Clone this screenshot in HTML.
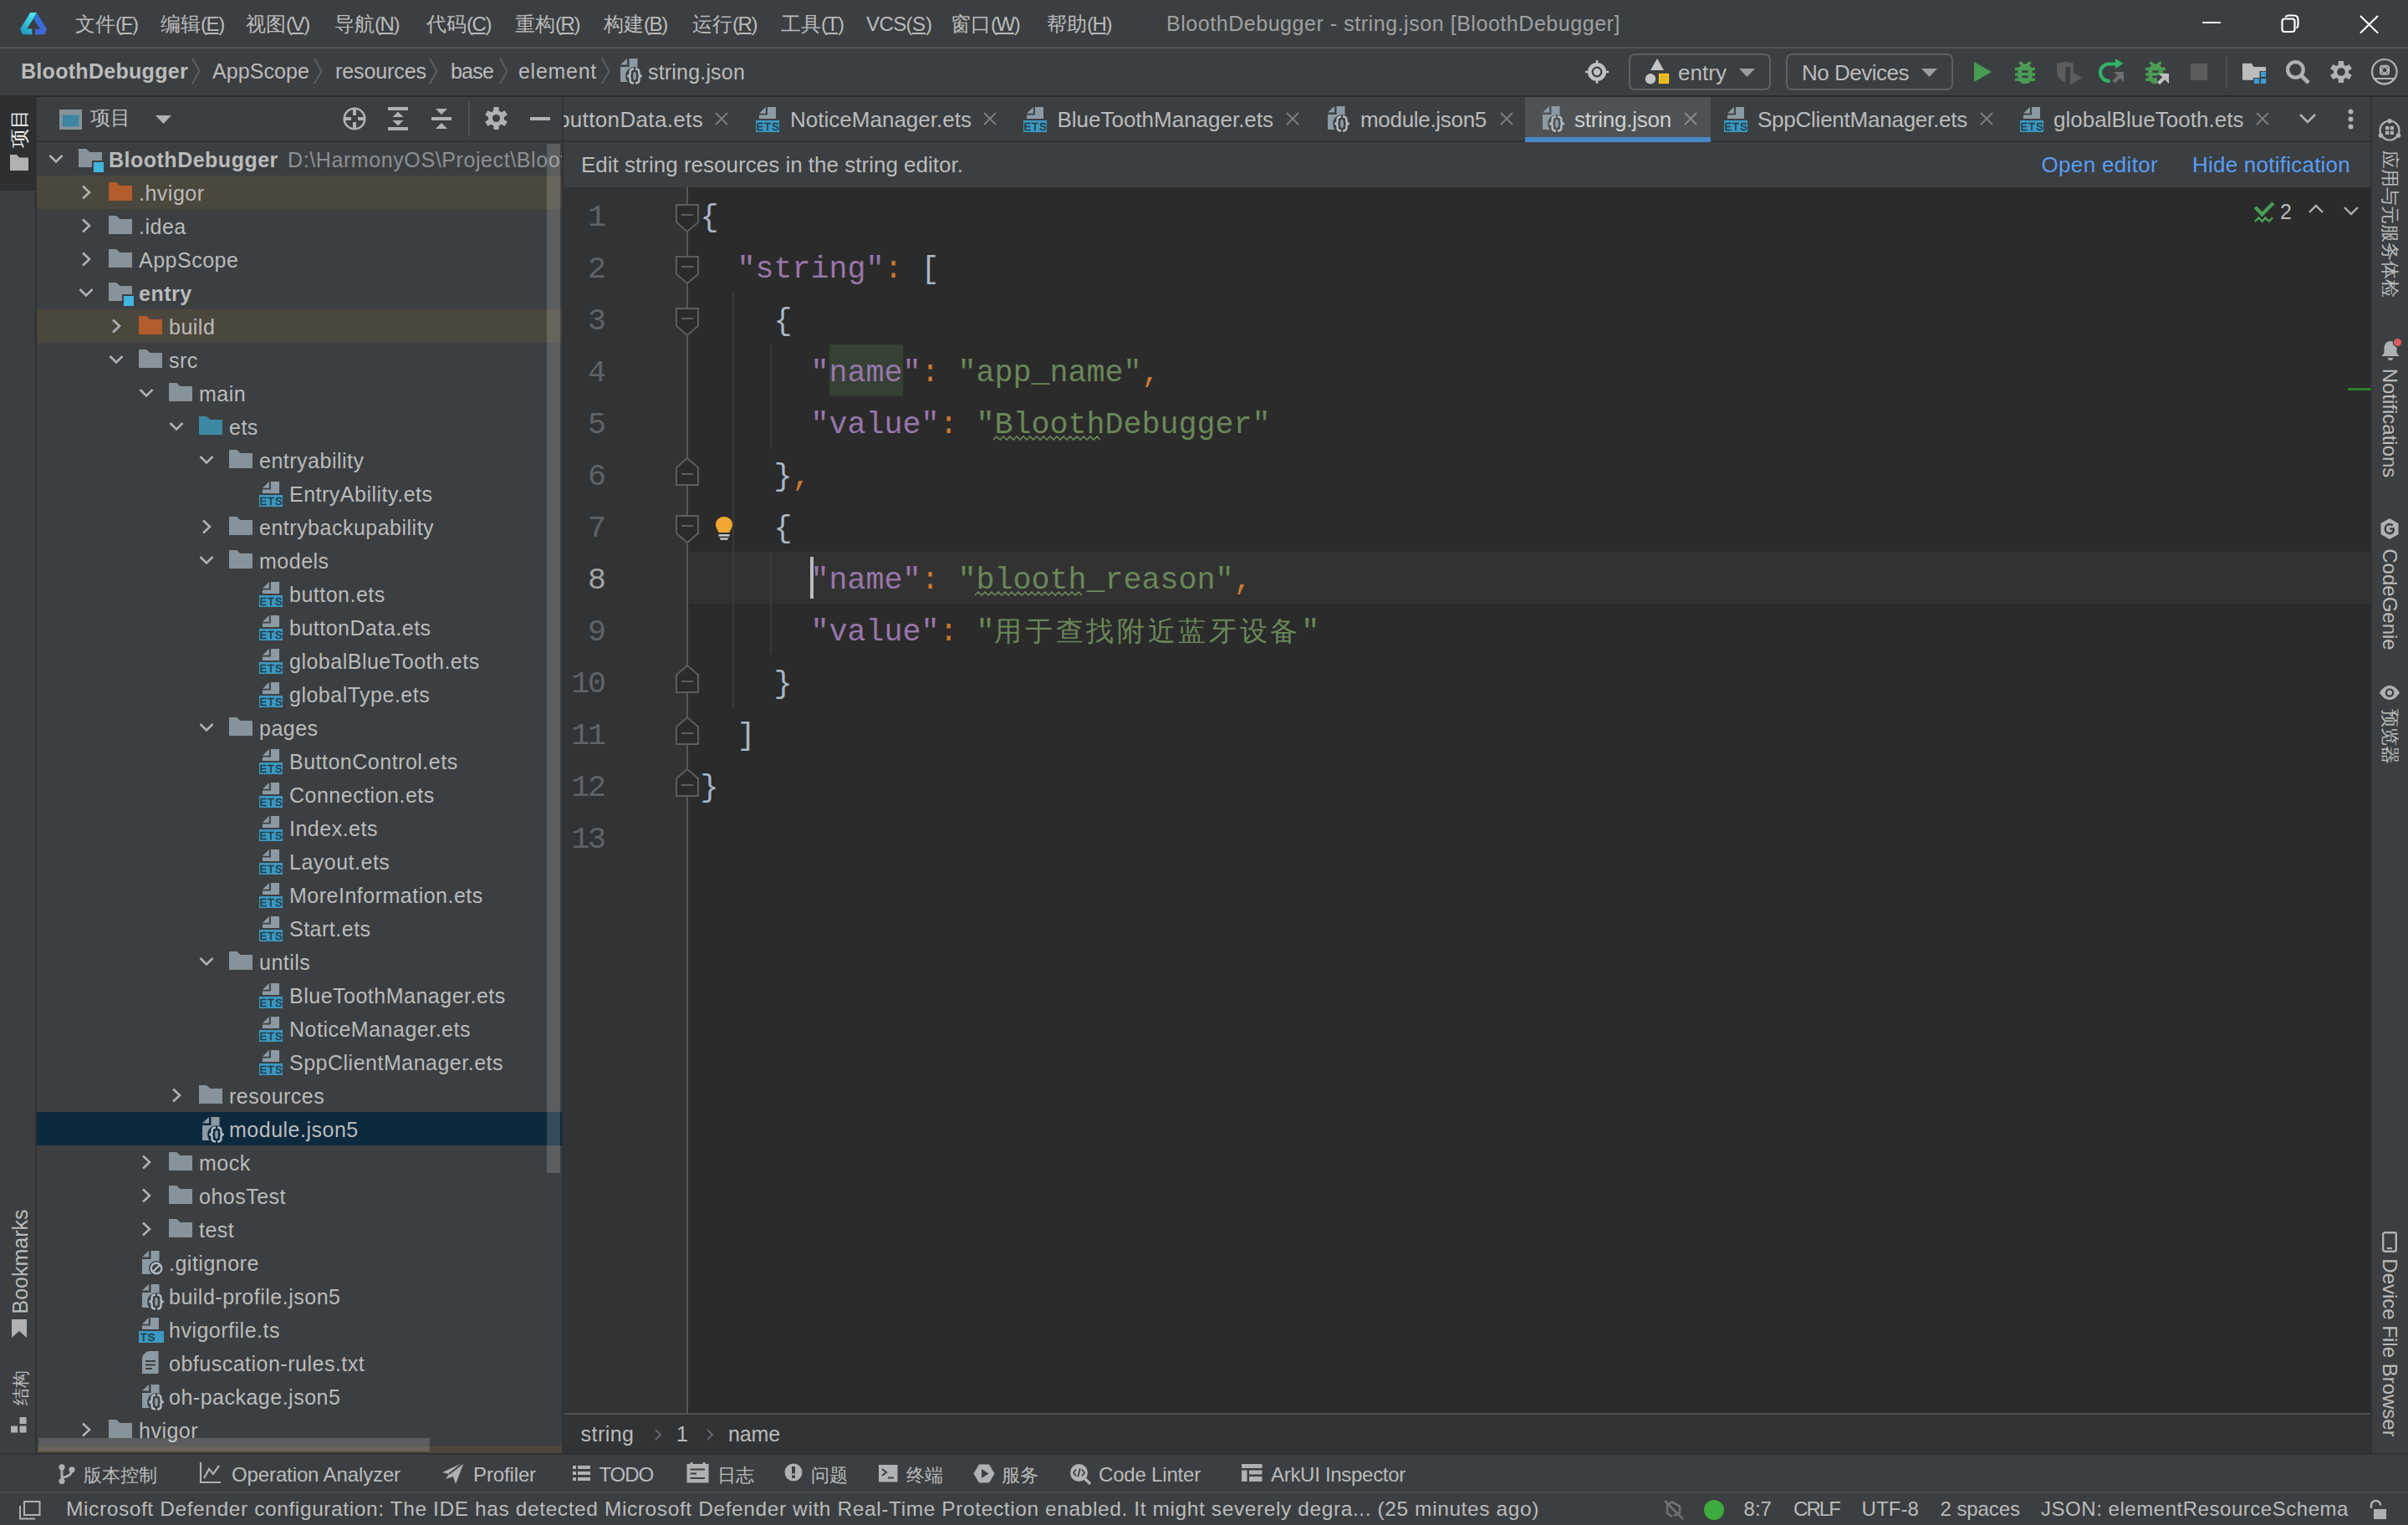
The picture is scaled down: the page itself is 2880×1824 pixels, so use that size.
<!DOCTYPE html><html><head><meta charset="utf-8"><title>DevEco Studio</title><style>
*{box-sizing:border-box}
html,body{margin:0;padding:0}
body{width:2880px;height:1824px;overflow:hidden;background:#3c3f41;position:relative;font-family:"Liberation Sans",sans-serif;color:#bbbbbb;font-size:25px}
.a{position:absolute;white-space:nowrap}
.t{position:absolute;white-space:nowrap;height:80px;line-height:80px}
.t span{line-height:0}
svg{position:absolute;overflow:visible}
.m{font-family:"Liberation Mono",monospace}
.b{font-weight:bold}
</style></head><body><div class="a" style="left:0px;top:56px;width:2880px;height:2px;background:#515151;"></div><div class="a" style="left:0px;top:114px;width:2880px;height:2px;background:#2b2b2b;"></div><div class="a" style="left:0px;top:114px;width:42px;height:114px;background:#2d2f31;"></div><div class="a" style="left:42px;top:116px;width:2px;height:1624px;background:#2f3133;"></div><div class="a" style="left:44px;top:168px;width:628px;height:2px;background:#323232;"></div><div class="a" style="left:672px;top:116px;width:2px;height:1624px;background:#2f3133;"></div><div class="a" style="left:674px;top:168px;width:2163px;height:2px;background:#323232;"></div><div class="a" style="left:674px;top:224px;width:148px;height:1466px;background:#313335;"></div><div class="a" style="left:822px;top:224px;width:2015px;height:1466px;background:#2b2b2b;"></div><div class="a" style="left:674px;top:1690px;width:2163px;height:2px;background:#505254;"></div><div class="a" style="left:674px;top:1692px;width:2163px;height:48px;background:#313335;"></div><div class="a" style="left:2835px;top:116px;width:2px;height:1624px;background:#2f3133;"></div><div class="a" style="left:0px;top:1738px;width:2880px;height:2px;background:#2f3133;"></div><div class="a" style="left:0px;top:1784px;width:2880px;height:2px;background:#47494b;"></div><svg style="left:24px;top:14px" width="34" height="28" viewBox="0 0 34 28"><defs><linearGradient id="lg1" x1="0" y1="1" x2="0.6" y2="0"><stop offset="0" stop-color="#1a8fc0"/><stop offset="1" stop-color="#48e3ea"/></linearGradient>
<linearGradient id="lg2" x1="0" y1="0" x2="1" y2="1"><stop offset="0" stop-color="#2872d8"/><stop offset="1" stop-color="#4766d6"/></linearGradient></defs>
<polygon fill="url(#lg1)" points="12.3,1 20,1 16,8.1 8.2,20.4 14.2,20.4 14.2,27.2 3.2,27.2 0,20.8"/>
<polygon fill="url(#lg2)" points="20,1.4 32.1,20.8 29.1,27.2 18.1,27.2 18.1,20.8 23.9,20.8 16,8.1"/></svg><div class="t" style="left:90px;top:-10.52px;font-size:24px;color:#bbbbbb;"><span style="font-size:23.5px">文件</span><span style="letter-spacing:-1.6px">(</span><span style="letter-spacing:-1.2px"><span style="text-decoration:underline;text-decoration-thickness:2px;text-underline-offset:2px">F</span></span>)</div><div class="t" style="left:192px;top:-10.52px;font-size:24px;color:#bbbbbb;"><span style="font-size:23.5px">编辑</span><span style="letter-spacing:-1.6px">(</span><span style="letter-spacing:-1.2px"><span style="text-decoration:underline;text-decoration-thickness:2px;text-underline-offset:2px">E</span></span>)</div><div class="t" style="left:294px;top:-10.52px;font-size:24px;color:#bbbbbb;"><span style="font-size:23.5px">视图</span><span style="letter-spacing:-1.6px">(</span><span style="letter-spacing:-1.2px"><span style="text-decoration:underline;text-decoration-thickness:2px;text-underline-offset:2px">V</span></span>)</div><div class="t" style="left:400px;top:-10.52px;font-size:24px;color:#bbbbbb;"><span style="font-size:23.5px">导航</span><span style="letter-spacing:-1.6px">(</span><span style="letter-spacing:-1.2px"><span style="text-decoration:underline;text-decoration-thickness:2px;text-underline-offset:2px">N</span></span>)</div><div class="t" style="left:510px;top:-10.52px;font-size:24px;color:#bbbbbb;"><span style="font-size:23.5px">代码</span><span style="letter-spacing:-1.6px">(</span><span style="letter-spacing:-1.2px"><span style="text-decoration:underline;text-decoration-thickness:2px;text-underline-offset:2px">C</span></span>)</div><div class="t" style="left:616px;top:-10.52px;font-size:24px;color:#bbbbbb;"><span style="font-size:23.5px">重构</span><span style="letter-spacing:-1.6px">(</span><span style="letter-spacing:-1.2px"><span style="text-decoration:underline;text-decoration-thickness:2px;text-underline-offset:2px">R</span></span>)</div><div class="t" style="left:722px;top:-10.52px;font-size:24px;color:#bbbbbb;"><span style="font-size:23.5px">构建</span><span style="letter-spacing:-1.6px">(</span><span style="letter-spacing:-1.2px"><span style="text-decoration:underline;text-decoration-thickness:2px;text-underline-offset:2px">B</span></span>)</div><div class="t" style="left:828px;top:-10.52px;font-size:24px;color:#bbbbbb;"><span style="font-size:23.5px">运行</span><span style="letter-spacing:-1.6px">(</span><span style="letter-spacing:-1.2px"><span style="text-decoration:underline;text-decoration-thickness:2px;text-underline-offset:2px">R</span></span>)</div><div class="t" style="left:934px;top:-10.52px;font-size:24px;color:#bbbbbb;"><span style="font-size:23.5px">工具</span><span style="letter-spacing:-1.6px">(</span><span style="letter-spacing:-1.2px"><span style="text-decoration:underline;text-decoration-thickness:2px;text-underline-offset:2px">T</span></span>)</div><div class="t" style="left:1036px;top:-10.52px;font-size:24px;color:#bbbbbb;"><span style="letter-spacing:-0.6px">VCS(</span><span style="text-decoration:underline;text-decoration-thickness:2px;text-underline-offset:2px">S</span>)</div><div class="t" style="left:1137px;top:-10.52px;font-size:24px;color:#bbbbbb;"><span style="font-size:23.5px">窗口</span><span style="letter-spacing:-1.6px">(</span><span style="letter-spacing:-1.2px"><span style="text-decoration:underline;text-decoration-thickness:2px;text-underline-offset:2px">W</span></span>)</div><div class="t" style="left:1252px;top:-10.52px;font-size:24px;color:#bbbbbb;"><span style="font-size:23.5px">帮助</span><span style="letter-spacing:-1.6px">(</span><span style="letter-spacing:-1.2px"><span style="text-decoration:underline;text-decoration-thickness:2px;text-underline-offset:2px">H</span></span>)</div><div class="t" style="left:1395px;top:-12.46px;font-size:25px;color:#a0a0a0;letter-spacing:0.547px;">BloothDebugger - string.json [BloothDebugger]</div><svg style="left:2634px;top:18px" width="24" height="22" viewBox="0 0 24 22"><line x1="1" y1="9" x2="21" y2="9" stroke="#ffffff" stroke-width="2.2" stroke-linecap="round"/></svg><svg style="left:2728px;top:17px" width="24" height="24" viewBox="0 0 24 24"><path d="M5.5 3.5 C6.2 2 7.5 1.5 9.5 1.5 H15.5 C18.8 1.5 20.5 3.3 20.5 6.5 V13 C20.5 14.8 20 15.8 18.5 16.5" fill="none" stroke="#ffffff" stroke-width="2.2"/><rect x="1.5" y="5.5" width="15" height="15.5" rx="3" fill="none" stroke="#ffffff" stroke-width="2.2"/></svg><svg style="left:2822px;top:18px" width="24" height="24" viewBox="0 0 24 24"><path d="M1.5 1.5 L21.5 21 M21.5 1.5 L1.5 21" stroke="#ffffff" stroke-width="2" stroke-linecap="round"/></svg><div class="t b" style="left:25px;top:45.34px;font-size:25px;color:#bbbbbb;letter-spacing:0.298px;">BloothDebugger</div><svg style="left:229px;top:70px" width="11" height="30" viewBox="0 0 11 30"><path d="M1 0 L9.5 15.0 L1 30" fill="none" stroke="#5f6264" stroke-width="1.8"/></svg><div class="t" style="left:254px;top:45.34px;font-size:25px;color:#bbbbbb;letter-spacing:0.078px;">AppScope</div><svg style="left:375px;top:70px" width="11" height="30" viewBox="0 0 11 30"><path d="M1 0 L9.5 15.0 L1 30" fill="none" stroke="#5f6264" stroke-width="1.8"/></svg><div class="t" style="left:401px;top:45.34px;font-size:25px;color:#bbbbbb;letter-spacing:-0.085px;">resources</div><svg style="left:513px;top:70px" width="11" height="30" viewBox="0 0 11 30"><path d="M1 0 L9.5 15.0 L1 30" fill="none" stroke="#5f6264" stroke-width="1.8"/></svg><div class="t" style="left:539px;top:45.34px;font-size:25px;color:#bbbbbb;letter-spacing:-0.805px;">base</div><svg style="left:597px;top:70px" width="11" height="30" viewBox="0 0 11 30"><path d="M1 0 L9.5 15.0 L1 30" fill="none" stroke="#5f6264" stroke-width="1.8"/></svg><div class="t" style="left:620px;top:45.34px;font-size:25px;color:#bbbbbb;letter-spacing:0.721px;">element</div><svg style="left:719px;top:70px" width="11" height="30" viewBox="0 0 11 30"><path d="M1 0 L9.5 15.0 L1 30" fill="none" stroke="#5f6264" stroke-width="1.8"/></svg><svg width="0" height="0" style="position:absolute"><defs>
<symbol id="ijson" viewBox="0 0 28 32"><path fill="#8c9aa4" d="M0 7.5 L8 0 V7.5 Z M10.5 0 H20.5 V28 H0 V10 H10.5 Z"/><circle cx="17" cy="21" r="10.8" fill="var(--bg)"/>
<path fill="none" stroke="#afbac3" stroke-width="2.5" d="M16 12.6 C12.6 12.6 11.6 13.8 11.6 16.3 V18.6 C11.6 20.1 10.6 21 8.2 21 C10.6 21 11.6 21.9 11.6 23.4 V25.7 C11.6 28.2 12.6 29.4 16 29.4 M18 12.6 C21.4 12.6 22.4 13.8 22.4 16.3 V18.6 C22.4 20.1 23.4 21 25.8 21 C23.4 21 22.4 21.9 22.4 23.4 V25.7 C22.4 28.2 21.4 29.4 18 29.4"/>
<ellipse cx="17" cy="21" rx="1.9" ry="5.2" fill="#8c9aa4"/></symbol>
<symbol id="iets" viewBox="0 0 28 30"><path fill="#8c9aa4" d="M4 7.8 L11.9 0 V7.8 Z M13.9 0 H24 V14 H4 V9.6 H13.9 Z"/><rect x="0" y="16" width="28.2" height="14" fill="#3d98c0"/>
<text x="14.5" y="28" text-anchor="middle" font-family="Liberation Sans" font-size="13" fill="#1c3a48" stroke="#1c3a48" stroke-width="0.45" letter-spacing="0.9">ETS</text></symbol>
<symbol id="its" viewBox="0 0 30 30"><path fill="#8c9aa4" d="M4 7.8 L11.9 0 V7.8 Z M13.9 0 H24 V14 H4 V9.6 H13.9 Z"/><rect x="0" y="16" width="30" height="14" fill="#3d98c0"/>
<text x="11" y="28.2" text-anchor="middle" font-family="Liberation Sans" font-size="13" fill="#1c3a48" stroke="#1c3a48" stroke-width="0.45" letter-spacing="0.9">TS</text></symbol>
<symbol id="ifold" viewBox="0 0 28 22"><path d="M0 0 H9.2 L13.4 3.9 H28 V22 H0 Z"/></symbol>
<symbol id="imod" viewBox="0 0 30 28"><path fill="#87939a" d="M0 0 H9.2 L13.4 3.9 H28 V14 H15 V22 H0 Z"/><rect x="18" y="16" width="12" height="12" fill="#40b6e0"/></symbol>
</defs></svg><svg style="left:742px;top:70px;--bg:#3c3f41" width="28" height="32"><use href="#ijson" width="28" height="32"/></svg><div class="t" style="left:775px;top:45.54px;font-size:25px;color:#bbbbbb;letter-spacing:0.186px;">string.json</div><svg style="left:1896px;top:72px" width="28" height="28" viewBox="0 0 28 28"><circle cx="14" cy="14" r="11.1" fill="#bfc1c3"/><circle cx="14" cy="14" r="5.3" fill="none" stroke="#3c3f41" stroke-width="2.2"/><path d="M14 0 V4 M14 24 V28 M0 14 H4 M24 14 H28" stroke="#bfc1c3" stroke-width="2.4"/></svg><div class="a" style="left:1948px;top:64px;width:170px;height:44px;background:transparent;border:2px solid #5e6061;border-radius:7px"></div><svg style="left:1966px;top:70px" width="32" height="32" viewBox="0 0 32 32"><polygon points="16,0 24,14 8,14" fill="#c5c5c5"/><circle cx="8" cy="24.3" r="6.2" fill="#c5c5c5"/><rect x="18.5" y="18.5" width="11" height="11" fill="#e8b820" stroke="#f7cc28" stroke-width="1.2"/></svg><div class="t" style="left:2007px;top:46.99px;font-size:26px;color:#bbbbbb;letter-spacing:0.037px;">entry</div><svg style="left:2080px;top:82px" width="20" height="11" viewBox="0 0 20 11"><polygon points="0,0 19,0 9.5,10" fill="#9a9da1"/></svg><div class="a" style="left:2136px;top:64px;width:200px;height:44px;background:transparent;border:2px solid #5e6061;border-radius:7px"></div><div class="t" style="left:2155px;top:46.99px;font-size:26px;color:#bbbbbb;letter-spacing:-0.494px;">No Devices</div><svg style="left:2298px;top:82px" width="20" height="11" viewBox="0 0 20 11"><polygon points="0,0 19,0 9.5,10" fill="#9a9da1"/></svg><svg style="left:2360px;top:73px" width="24" height="26" viewBox="0 0 24 26"><polygon points="1,1 22,13 1,25" fill="#499c54"/></svg><svg style="left:2410px;top:72px" width="24" height="29" viewBox="0 0 24 29"><g fill="#499c54"><path d="M5.4 2.4 L12 7.8 L18.6 2.4" fill="none" stroke="#499c54" stroke-width="3.4"/><rect x="3.3" y="4.6" width="17.4" height="23.6" rx="8.7"/><rect x="0" y="8.7" width="24" height="3.4"/><rect x="0" y="15.4" width="24" height="3.3"/><rect x="0" y="21.6" width="24" height="3.3"/></g><rect x="8.3" y="12.3" width="7.4" height="2.6" fill="#3c3f41"/><rect x="8.3" y="18.6" width="7.4" height="2.6" fill="#3c3f41"/></svg><svg style="left:2459px;top:73px" width="32" height="30" viewBox="0 0 32 30"><path d="M1 2.8 L11 0.8 L21 2.8 V12.5 H17 V7 H11.5 V26 C5 23 1 19 1 12 Z" fill="#5b5c5e"/><polygon points="17,11.5 31,20 17,28.8" fill="#5b5c5e"/></svg><svg style="left:2509px;top:69px" width="34" height="34" viewBox="0 0 34 34"><path d="M21 7.5 H13.5 C7.5 7.5 3 12 3 17.5 C3 23 7.5 27.8 13 27.8" fill="none" stroke="#2fb36a" stroke-width="4.2" stroke-linecap="round"/><polygon points="21,1 30.5,7 21,13" fill="#2fb36a"/><path d="M19 29 L27 21" stroke="#6e6e6e" stroke-width="4.2"/><polygon points="19.3,17 31,17 31,29" fill="#6e6e6e"/></svg><svg style="left:2566px;top:72px" width="32" height="30" viewBox="0 0 32 30"><g fill="#499c54"><path d="M5.4 2.4 L12 7.8 L18.6 2.4" fill="none" stroke="#499c54" stroke-width="3.4"/><rect x="3.3" y="4.6" width="17.4" height="23.6" rx="8.7"/><rect x="0" y="8.7" width="24" height="3.4"/><rect x="0" y="15.4" width="24" height="3.3"/><rect x="0" y="21.6" width="24" height="3.3"/></g><rect x="8.3" y="12.3" width="7.4" height="2.6" fill="#3c3f41"/><rect x="8.3" y="18.6" width="7.4" height="2.6" fill="#3c3f41"/><path d="M14 30 V18 H26 V30 Z" fill="#3c3f41"/><path d="M15.5 27.7 L24 19.4" stroke="#c0c0c0" stroke-width="4.2"/><polygon points="16,16 28,16 28,28" fill="#c0c0c0"/></svg><div class="a" style="left:2620px;top:76px;width:20px;height:20px;background:#5b5c5e;"></div><div class="a" style="left:2662px;top:66px;width:2px;height:40px;background:#515151;"></div><svg style="left:2682px;top:75px" width="30" height="26" viewBox="0 0 30 26"><path d="M0 0.8 H11 L13.3 5 H28 V10 H20.5 V18 H13 V20.8 H0 Z" fill="#bcbcbc"/><rect x="22" y="10.8" width="6.2" height="6.2" fill="#3d9ad6"/><rect x="14" y="19" width="6.2" height="6" fill="#3d9ad6"/><rect x="22" y="19" width="6.2" height="6" fill="#3d9ad6"/></svg><svg style="left:2734px;top:72px" width="32" height="32" viewBox="0 0 32 32"><circle cx="11.4" cy="11.4" r="9.3" fill="none" stroke="#afb1b3" stroke-width="4.3"/><path d="M18.5 18.5 L27 27" stroke="#afb1b3" stroke-width="4.6"/></svg><svg style="left:2787px;top:73px" width="26" height="26" viewBox="0 0 26 26"><g fill="#afb1b3"><rect x="9.8" y="0" width="6.4" height="6.5" rx="0.8" transform="rotate(0 13 13)"/><rect x="9.8" y="0" width="6.4" height="6.5" rx="0.8" transform="rotate(60 13 13)"/><rect x="9.8" y="0" width="6.4" height="6.5" rx="0.8" transform="rotate(120 13 13)"/><rect x="9.8" y="0" width="6.4" height="6.5" rx="0.8" transform="rotate(180 13 13)"/><rect x="9.8" y="0" width="6.4" height="6.5" rx="0.8" transform="rotate(240 13 13)"/><rect x="9.8" y="0" width="6.4" height="6.5" rx="0.8" transform="rotate(300 13 13)"/><circle cx="13" cy="13" r="9.1"/></g><circle cx="13" cy="13" r="4.8" fill="#3c3f41"/></svg><svg style="left:2835px;top:69px" width="34" height="34" viewBox="0 0 34 34"><circle cx="16.8" cy="16.8" r="14.8" fill="none" stroke="#afb1b3" stroke-width="2.2"/><rect x="12" y="9.8" width="10" height="10" rx="2.5" fill="none" stroke="#afb1b3" stroke-width="2"/><circle cx="17" cy="14.8" r="3.3" fill="none" stroke="#afb1b3" stroke-width="1.6"/><path d="M5.2 25 H28.4 C26 29 21.5 31.2 16.8 31.2 C12 31.2 7.6 29 5.2 25 Z" fill="none" stroke="#afb1b3" stroke-width="2"/></svg><div class="a" style="left:23.5px;top:153.5px;width:0;height:0"><div style="position:absolute;left:0;top:0;transform:translate(-50%,-50%) rotate(-90deg);white-space:nowrap;font-size:22.5px;line-height:28.5px;color:#f0f0f0">项目</div></div><svg style="left:12px;top:185px" width="23" height="20" viewBox="0 0 23 20"><path d="M0 0 H8 L11 3.5 H22 V19 H0 Z" fill="#afb1b3"/></svg><div class="a" style="left:23.5px;top:1509px;width:0;height:0"><div style="position:absolute;left:0;top:0;transform:translate(-50%,-50%) rotate(-90deg);white-space:nowrap;font-size:25px;line-height:31px;color:#bbbbbb">Bookmarks</div></div><svg style="left:13px;top:1578px" width="20" height="23" viewBox="0 0 20 23"><path d="M1 0 H19 V22 L10 14 L1 22 Z" fill="#afb1b3"/></svg><div class="a" style="left:24px;top:1660px;width:0;height:0"><div style="position:absolute;left:0;top:0;transform:translate(-50%,-50%) rotate(-90deg);white-space:nowrap;font-size:21px;line-height:27px;color:#bbbbbb">结构</div></div><svg style="left:13px;top:1695px" width="20" height="20" viewBox="0 0 20 20"><rect x="10.5" y="0" width="8" height="8" fill="#afb1b3"/><rect x="0" y="10.5" width="8" height="8" fill="#afb1b3"/><rect x="10.5" y="10.5" width="8" height="8" fill="#afb1b3"/></svg><svg style="left:70px;top:130px" width="30" height="26" viewBox="0 0 30 26"><rect x="1" y="1" width="27" height="24" fill="#87939a"/><rect x="4.5" y="7.5" width="20" height="14" fill="#3d87a3"/></svg><div class="t" style="left:108px;top:103.18px;font-size:24px;color:#bbbbbb;"><span style="position:relative;top:-2px;font-size:24px">项目</span></div><svg style="left:186px;top:138px" width="20" height="11" viewBox="0 0 20 11"><polygon points="0,0 19,0 9.5,10" fill="#afb1b3"/></svg><svg style="left:410px;top:128px" width="28" height="28" viewBox="0 0 28 28"><circle cx="14" cy="14" r="12.3" fill="none" stroke="#afb1b3" stroke-width="2.6"/><path d="M14 2 V10 M14 18 V26 M2 14 H10 M18 14 H26" stroke="#afb1b3" stroke-width="4"/></svg><svg style="left:463px;top:127px" width="26" height="30" viewBox="0 0 26 30"><rect x="1" y="1" width="24" height="4" fill="#afb1b3"/><rect x="1" y="25" width="24" height="4" fill="#afb1b3"/><polygon points="6.5,13 19.5,13 13,6.5" fill="#afb1b3"/><polygon points="6.5,17 19.5,17 13,23.5" fill="#afb1b3"/></svg><svg style="left:515px;top:129px" width="26" height="26" viewBox="0 0 26 26"><rect x="1" y="11" width="24" height="4" fill="#afb1b3"/><polygon points="6,1 20,1 13,8" fill="#afb1b3"/><polygon points="6,25 20,25 13,18" fill="#afb1b3"/></svg><div class="a" style="left:560px;top:122px;width:2px;height:40px;background:#515151;"></div><svg style="left:580px;top:128px" width="28" height="28" viewBox="0 0 28 28"><g fill="#afb1b3"><rect x="10.3" y="0.0" width="6.4" height="6.75" rx="0.8" transform="rotate(0 13.5 13.5)"/><rect x="10.3" y="0.0" width="6.4" height="6.75" rx="0.8" transform="rotate(60 13.5 13.5)"/><rect x="10.3" y="0.0" width="6.4" height="6.75" rx="0.8" transform="rotate(120 13.5 13.5)"/><rect x="10.3" y="0.0" width="6.4" height="6.75" rx="0.8" transform="rotate(180 13.5 13.5)"/><rect x="10.3" y="0.0" width="6.4" height="6.75" rx="0.8" transform="rotate(240 13.5 13.5)"/><rect x="10.3" y="0.0" width="6.4" height="6.75" rx="0.8" transform="rotate(300 13.5 13.5)"/><circle cx="13.5" cy="13.5" r="9.45"/></g><circle cx="13.5" cy="13.5" r="4.6" fill="#3c3f41"/></svg><div class="a" style="left:634px;top:140px;width:24px;height:4px;background:#afb1b3;"></div><div class="a" style="left:674px;top:116px;width:200px;height:52px;overflow:hidden"><div class="t" style="left:-7px;top:-13.01px;font-size:26px;color:#bbbbbb;letter-spacing:0.348px;">buttonData.ets</div></div><svg style="left:855px;top:134px" width="16" height="16" viewBox="0 0 16 16"><path d="M1 1 L15 15 M15 1 L1 15" stroke="#7c7f81" stroke-width="1.8"/></svg><svg style="left:904px;top:128px;--bg:#3c3f41" width="28" height="30"><use href="#iets" width="28" height="30"/></svg><div class="t" style="left:945px;top:102.99px;font-size:26px;color:#bbbbbb;letter-spacing:0.012px;">NoticeManager.ets</div><svg style="left:1176px;top:134px" width="16" height="16" viewBox="0 0 16 16"><path d="M1 1 L15 15 M15 1 L1 15" stroke="#7c7f81" stroke-width="1.8"/></svg><svg style="left:1224px;top:128px;--bg:#3c3f41" width="28" height="30"><use href="#iets" width="28" height="30"/></svg><div class="t" style="left:1264.5px;top:102.99px;font-size:26px;color:#bbbbbb;letter-spacing:-0.012px;">BlueToothManager.ets</div><svg style="left:1538px;top:134px" width="16" height="16" viewBox="0 0 16 16"><path d="M1 1 L15 15 M15 1 L1 15" stroke="#7c7f81" stroke-width="1.8"/></svg><svg style="left:1588px;top:127px;--bg:#3c3f41" width="28" height="32"><use href="#ijson" width="28" height="32"/></svg><div class="t" style="left:1627px;top:102.99px;font-size:26px;color:#bbbbbb;letter-spacing:-0.305px;">module.json5</div><svg style="left:1794px;top:134px" width="16" height="16" viewBox="0 0 16 16"><path d="M1 1 L15 15 M15 1 L1 15" stroke="#7c7f81" stroke-width="1.8"/></svg><div class="a" style="left:1824px;top:116px;width:222px;height:48px;background:#4e5254;"></div><div class="a" style="left:1824px;top:164px;width:222px;height:6px;background:#4a88c7;"></div><svg style="left:1845px;top:127px;--bg:#4e5254" width="28" height="32"><use href="#ijson" width="28" height="32"/></svg><div class="t" style="left:1883px;top:102.99px;font-size:26px;color:#cfd0d1;letter-spacing:-0.227px;">string.json</div><svg style="left:2014px;top:134px" width="16" height="16" viewBox="0 0 16 16"><path d="M1 1 L15 15 M15 1 L1 15" stroke="#8a8d8f" stroke-width="1.8"/></svg><svg style="left:2062px;top:128px;--bg:#3c3f41" width="28" height="30"><use href="#iets" width="28" height="30"/></svg><div class="t" style="left:2102px;top:102.99px;font-size:26px;color:#bbbbbb;letter-spacing:-0.241px;">SppClientManager.ets</div><svg style="left:2368px;top:134px" width="16" height="16" viewBox="0 0 16 16"><path d="M1 1 L15 15 M15 1 L1 15" stroke="#7c7f81" stroke-width="1.8"/></svg><svg style="left:2416px;top:128px;--bg:#3c3f41" width="28" height="30"><use href="#iets" width="28" height="30"/></svg><div class="t" style="left:2456px;top:102.99px;font-size:26px;color:#bbbbbb;letter-spacing:0.029px;">globalBlueTooth.ets</div><svg style="left:2698px;top:134px" width="16" height="16" viewBox="0 0 16 16"><path d="M1 1 L15 15 M15 1 L1 15" stroke="#7c7f81" stroke-width="1.8"/></svg><svg style="left:2749px;top:134px" width="22" height="16" viewBox="0 0 22 16"><path d="M2 3 L11 12 L20 3" fill="none" stroke="#afb1b3" stroke-width="2.6"/></svg><svg style="left:2806px;top:130px" width="12" height="26" viewBox="0 0 12 26"><circle cx="5.5" cy="3.5" r="3" fill="#afb1b3"/><circle cx="5.5" cy="12.5" r="3" fill="#afb1b3"/><circle cx="5.5" cy="21.5" r="3" fill="#afb1b3"/></svg><div class="t" style="left:695px;top:156.99px;font-size:26px;color:#bbbbbb;letter-spacing:0.008px;">Edit string resources in the string editor.</div><div class="t" style="left:2441.5px;top:156.99px;font-size:26px;color:#589df6;letter-spacing:0.330px;">Open editor</div><div class="t" style="left:2622px;top:156.99px;font-size:26px;color:#589df6;letter-spacing:0.235px;">Hide notification</div><div class="a" style="left:44px;top:170px;width:628px;height:1568px;overflow:hidden"><svg style="left:14px;top:14px" width="18" height="12" viewBox="0 0 18 12"><path d="M1.5 2 L9 9.5 L16.5 2" fill="none" stroke="#afb1b3" stroke-width="2.6"/></svg><svg style="left:50px;top:8px" width="32" height="30" viewBox="0 0 32 30"><path d="M0 0 H9.2 L13.4 3.9 H28 V14 H16 V22 H0 Z" fill="#87939a"/><rect x="18" y="16" width="12" height="12" fill="#40b6e0"/></svg><div class="t b" style="left:86px;top:-18.66px;font-size:25px;color:#bbbbbb;letter-spacing:0.5px;">BloothDebugger</div><div class="t" style="left:300px;top:-18.66px;font-size:25px;color:#8d8f91;letter-spacing:0.6px;">D:\HarmonyOS\Project\BloothDebugger</div><div class="a" style="left:0px;top:40px;width:628px;height:40px;background:#4c473c;"></div><svg style="left:53px;top:51px" width="14" height="18" viewBox="0 0 14 18"><path d="M2 1.5 L10 9 L2 16.5" fill="none" stroke="#afb1b3" stroke-width="2.6"/></svg><svg style="left:86px;top:48px" width="28" height="22" viewBox="0 0 28 22"><path d="M0 0 H9.2 L13.4 3.9 H28 V22 H0 Z" fill="#b35c2e"/></svg><div class="t" style="left:122px;top:21.34px;font-size:25px;color:#bbbbbb;letter-spacing:0.5px;">.hvigor</div><svg style="left:53px;top:91px" width="14" height="18" viewBox="0 0 14 18"><path d="M2 1.5 L10 9 L2 16.5" fill="none" stroke="#afb1b3" stroke-width="2.6"/></svg><svg style="left:86px;top:88px" width="28" height="22" viewBox="0 0 28 22"><path d="M0 0 H9.2 L13.4 3.9 H28 V22 H0 Z" fill="#87939a"/></svg><div class="t" style="left:122px;top:61.34px;font-size:25px;color:#bbbbbb;letter-spacing:0.5px;">.idea</div><svg style="left:53px;top:131px" width="14" height="18" viewBox="0 0 14 18"><path d="M2 1.5 L10 9 L2 16.5" fill="none" stroke="#afb1b3" stroke-width="2.6"/></svg><svg style="left:86px;top:128px" width="28" height="22" viewBox="0 0 28 22"><path d="M0 0 H9.2 L13.4 3.9 H28 V22 H0 Z" fill="#87939a"/></svg><div class="t" style="left:122px;top:101.34px;font-size:25px;color:#bbbbbb;letter-spacing:0.5px;">AppScope</div><svg style="left:50px;top:174px" width="18" height="12" viewBox="0 0 18 12"><path d="M1.5 2 L9 9.5 L16.5 2" fill="none" stroke="#afb1b3" stroke-width="2.6"/></svg><svg style="left:86px;top:168px" width="32" height="30" viewBox="0 0 32 30"><path d="M0 0 H9.2 L13.4 3.9 H28 V14 H16 V22 H0 Z" fill="#87939a"/><rect x="18" y="16" width="12" height="12" fill="#40b6e0"/></svg><div class="t b" style="left:122px;top:141.34px;font-size:25px;color:#bbbbbb;letter-spacing:0.5px;">entry</div><div class="a" style="left:0px;top:200px;width:628px;height:40px;background:#4c473c;"></div><svg style="left:89px;top:211px" width="14" height="18" viewBox="0 0 14 18"><path d="M2 1.5 L10 9 L2 16.5" fill="none" stroke="#afb1b3" stroke-width="2.6"/></svg><svg style="left:122px;top:208px" width="28" height="22" viewBox="0 0 28 22"><path d="M0 0 H9.2 L13.4 3.9 H28 V22 H0 Z" fill="#b35c2e"/></svg><div class="t" style="left:158px;top:181.34px;font-size:25px;color:#bbbbbb;letter-spacing:0.5px;">build</div><svg style="left:86px;top:254px" width="18" height="12" viewBox="0 0 18 12"><path d="M1.5 2 L9 9.5 L16.5 2" fill="none" stroke="#afb1b3" stroke-width="2.6"/></svg><svg style="left:122px;top:248px" width="28" height="22" viewBox="0 0 28 22"><path d="M0 0 H9.2 L13.4 3.9 H28 V22 H0 Z" fill="#87939a"/></svg><div class="t" style="left:158px;top:221.34px;font-size:25px;color:#bbbbbb;letter-spacing:0.5px;">src</div><svg style="left:122px;top:294px" width="18" height="12" viewBox="0 0 18 12"><path d="M1.5 2 L9 9.5 L16.5 2" fill="none" stroke="#afb1b3" stroke-width="2.6"/></svg><svg style="left:158px;top:288px" width="28" height="22" viewBox="0 0 28 22"><path d="M0 0 H9.2 L13.4 3.9 H28 V22 H0 Z" fill="#87939a"/></svg><div class="t" style="left:194px;top:261.34px;font-size:25px;color:#bbbbbb;letter-spacing:0.5px;">main</div><svg style="left:158px;top:334px" width="18" height="12" viewBox="0 0 18 12"><path d="M1.5 2 L9 9.5 L16.5 2" fill="none" stroke="#afb1b3" stroke-width="2.6"/></svg><svg style="left:194px;top:328px" width="28" height="22" viewBox="0 0 28 22"><path d="M0 0 H9.2 L13.4 3.9 H28 V22 H0 Z" fill="#3d88a3"/></svg><div class="t" style="left:230px;top:301.34px;font-size:25px;color:#bbbbbb;letter-spacing:0.5px;">ets</div><svg style="left:194px;top:374px" width="18" height="12" viewBox="0 0 18 12"><path d="M1.5 2 L9 9.5 L16.5 2" fill="none" stroke="#afb1b3" stroke-width="2.6"/></svg><svg style="left:230px;top:368px" width="28" height="22" viewBox="0 0 28 22"><path d="M0 0 H9.2 L13.4 3.9 H28 V22 H0 Z" fill="#87939a"/></svg><div class="t" style="left:266px;top:341.34px;font-size:25px;color:#bbbbbb;letter-spacing:0.5px;">entryability</div><svg style="left:266px;top:406px;--bg:#3c3f41" width="28" height="30"><use href="#iets" width="28" height="30"/></svg><div class="t" style="left:302px;top:381.34px;font-size:25px;color:#bbbbbb;letter-spacing:0.5px;">EntryAbility.ets</div><svg style="left:197px;top:451px" width="14" height="18" viewBox="0 0 14 18"><path d="M2 1.5 L10 9 L2 16.5" fill="none" stroke="#afb1b3" stroke-width="2.6"/></svg><svg style="left:230px;top:448px" width="28" height="22" viewBox="0 0 28 22"><path d="M0 0 H9.2 L13.4 3.9 H28 V22 H0 Z" fill="#87939a"/></svg><div class="t" style="left:266px;top:421.34px;font-size:25px;color:#bbbbbb;letter-spacing:0.5px;">entrybackupability</div><svg style="left:194px;top:494px" width="18" height="12" viewBox="0 0 18 12"><path d="M1.5 2 L9 9.5 L16.5 2" fill="none" stroke="#afb1b3" stroke-width="2.6"/></svg><svg style="left:230px;top:488px" width="28" height="22" viewBox="0 0 28 22"><path d="M0 0 H9.2 L13.4 3.9 H28 V22 H0 Z" fill="#87939a"/></svg><div class="t" style="left:266px;top:461.34px;font-size:25px;color:#bbbbbb;letter-spacing:0.5px;">models</div><svg style="left:266px;top:526px;--bg:#3c3f41" width="28" height="30"><use href="#iets" width="28" height="30"/></svg><div class="t" style="left:302px;top:501.34px;font-size:25px;color:#bbbbbb;letter-spacing:0.5px;">button.ets</div><svg style="left:266px;top:566px;--bg:#3c3f41" width="28" height="30"><use href="#iets" width="28" height="30"/></svg><div class="t" style="left:302px;top:541.34px;font-size:25px;color:#bbbbbb;letter-spacing:0.5px;">buttonData.ets</div><svg style="left:266px;top:606px;--bg:#3c3f41" width="28" height="30"><use href="#iets" width="28" height="30"/></svg><div class="t" style="left:302px;top:581.34px;font-size:25px;color:#bbbbbb;letter-spacing:0.5px;">globalBlueTooth.ets</div><svg style="left:266px;top:646px;--bg:#3c3f41" width="28" height="30"><use href="#iets" width="28" height="30"/></svg><div class="t" style="left:302px;top:621.34px;font-size:25px;color:#bbbbbb;letter-spacing:0.5px;">globalType.ets</div><svg style="left:194px;top:694px" width="18" height="12" viewBox="0 0 18 12"><path d="M1.5 2 L9 9.5 L16.5 2" fill="none" stroke="#afb1b3" stroke-width="2.6"/></svg><svg style="left:230px;top:688px" width="28" height="22" viewBox="0 0 28 22"><path d="M0 0 H9.2 L13.4 3.9 H28 V22 H0 Z" fill="#87939a"/></svg><div class="t" style="left:266px;top:661.34px;font-size:25px;color:#bbbbbb;letter-spacing:0.5px;">pages</div><svg style="left:266px;top:726px;--bg:#3c3f41" width="28" height="30"><use href="#iets" width="28" height="30"/></svg><div class="t" style="left:302px;top:701.34px;font-size:25px;color:#bbbbbb;letter-spacing:0.5px;">ButtonControl.ets</div><svg style="left:266px;top:766px;--bg:#3c3f41" width="28" height="30"><use href="#iets" width="28" height="30"/></svg><div class="t" style="left:302px;top:741.34px;font-size:25px;color:#bbbbbb;letter-spacing:0.5px;">Connection.ets</div><svg style="left:266px;top:806px;--bg:#3c3f41" width="28" height="30"><use href="#iets" width="28" height="30"/></svg><div class="t" style="left:302px;top:781.34px;font-size:25px;color:#bbbbbb;letter-spacing:0.5px;">Index.ets</div><svg style="left:266px;top:846px;--bg:#3c3f41" width="28" height="30"><use href="#iets" width="28" height="30"/></svg><div class="t" style="left:302px;top:821.34px;font-size:25px;color:#bbbbbb;letter-spacing:0.5px;">Layout.ets</div><svg style="left:266px;top:886px;--bg:#3c3f41" width="28" height="30"><use href="#iets" width="28" height="30"/></svg><div class="t" style="left:302px;top:861.34px;font-size:25px;color:#bbbbbb;letter-spacing:0.5px;">MoreInformation.ets</div><svg style="left:266px;top:926px;--bg:#3c3f41" width="28" height="30"><use href="#iets" width="28" height="30"/></svg><div class="t" style="left:302px;top:901.34px;font-size:25px;color:#bbbbbb;letter-spacing:0.5px;">Start.ets</div><svg style="left:194px;top:974px" width="18" height="12" viewBox="0 0 18 12"><path d="M1.5 2 L9 9.5 L16.5 2" fill="none" stroke="#afb1b3" stroke-width="2.6"/></svg><svg style="left:230px;top:968px" width="28" height="22" viewBox="0 0 28 22"><path d="M0 0 H9.2 L13.4 3.9 H28 V22 H0 Z" fill="#87939a"/></svg><div class="t" style="left:266px;top:941.34px;font-size:25px;color:#bbbbbb;letter-spacing:0.5px;">untils</div><svg style="left:266px;top:1006px;--bg:#3c3f41" width="28" height="30"><use href="#iets" width="28" height="30"/></svg><div class="t" style="left:302px;top:981.34px;font-size:25px;color:#bbbbbb;letter-spacing:0.5px;">BlueToothManager.ets</div><svg style="left:266px;top:1046px;--bg:#3c3f41" width="28" height="30"><use href="#iets" width="28" height="30"/></svg><div class="t" style="left:302px;top:1021.34px;font-size:25px;color:#bbbbbb;letter-spacing:0.5px;">NoticeManager.ets</div><svg style="left:266px;top:1086px;--bg:#3c3f41" width="28" height="30"><use href="#iets" width="28" height="30"/></svg><div class="t" style="left:302px;top:1061.34px;font-size:25px;color:#bbbbbb;letter-spacing:0.5px;">SppClientManager.ets</div><svg style="left:161px;top:1131px" width="14" height="18" viewBox="0 0 14 18"><path d="M2 1.5 L10 9 L2 16.5" fill="none" stroke="#afb1b3" stroke-width="2.6"/></svg><svg style="left:194px;top:1128px" width="28" height="22" viewBox="0 0 28 22"><path d="M0 0 H9.2 L13.4 3.9 H28 V22 H0 Z" fill="#87939a"/></svg><div class="t" style="left:230px;top:1101.34px;font-size:25px;color:#bbbbbb;letter-spacing:0.5px;">resources</div><div class="a" style="left:0px;top:1160px;width:628px;height:40px;background:#0d293e;"></div><svg style="left:198px;top:1166px;--bg:#0d293e" width="28" height="32"><use href="#ijson" width="28" height="32"/></svg><div class="t" style="left:230px;top:1141.34px;font-size:25px;color:#bbbbbb;letter-spacing:0.5px;">module.json5</div><svg style="left:125px;top:1211px" width="14" height="18" viewBox="0 0 14 18"><path d="M2 1.5 L10 9 L2 16.5" fill="none" stroke="#afb1b3" stroke-width="2.6"/></svg><svg style="left:158px;top:1208px" width="28" height="22" viewBox="0 0 28 22"><path d="M0 0 H9.2 L13.4 3.9 H28 V22 H0 Z" fill="#87939a"/></svg><div class="t" style="left:194px;top:1181.34px;font-size:25px;color:#bbbbbb;letter-spacing:0.5px;">mock</div><svg style="left:125px;top:1251px" width="14" height="18" viewBox="0 0 14 18"><path d="M2 1.5 L10 9 L2 16.5" fill="none" stroke="#afb1b3" stroke-width="2.6"/></svg><svg style="left:158px;top:1248px" width="28" height="22" viewBox="0 0 28 22"><path d="M0 0 H9.2 L13.4 3.9 H28 V22 H0 Z" fill="#87939a"/></svg><div class="t" style="left:194px;top:1221.34px;font-size:25px;color:#bbbbbb;letter-spacing:0.5px;">ohosTest</div><svg style="left:125px;top:1291px" width="14" height="18" viewBox="0 0 14 18"><path d="M2 1.5 L10 9 L2 16.5" fill="none" stroke="#afb1b3" stroke-width="2.6"/></svg><svg style="left:158px;top:1288px" width="28" height="22" viewBox="0 0 28 22"><path d="M0 0 H9.2 L13.4 3.9 H28 V22 H0 Z" fill="#87939a"/></svg><div class="t" style="left:194px;top:1261.34px;font-size:25px;color:#bbbbbb;letter-spacing:0.5px;">test</div><svg style="left:126px;top:1326px" width="28" height="32" viewBox="0 0 28 32"><path fill="#8c9aa4" d="M0 7.5 L8 0 V7.5 Z M10.5 0 H20.5 V28 H0 V10 H10.5 Z"/><circle cx="17" cy="21" r="9" fill="#3c3f41"/><circle cx="17" cy="21" r="6.3" fill="none" stroke="#afbac3" stroke-width="2.4"/><path d="M13 25 L21 17" stroke="#afbac3" stroke-width="2.4"/></svg><div class="t" style="left:158px;top:1301.34px;font-size:25px;color:#bbbbbb;letter-spacing:0.5px;">.gitignore</div><svg style="left:126px;top:1366px;--bg:#3c3f41" width="28" height="32"><use href="#ijson" width="28" height="32"/></svg><div class="t" style="left:158px;top:1341.34px;font-size:25px;color:#bbbbbb;letter-spacing:0.5px;">build-profile.json5</div><svg style="left:122px;top:1406px;--bg:#3c3f41" width="30" height="30"><use href="#its" width="30" height="30"/></svg><div class="t" style="left:158px;top:1381.34px;font-size:25px;color:#bbbbbb;letter-spacing:0.5px;">hvigorfile.ts</div><svg style="left:126px;top:1446px" width="22" height="30" viewBox="0 0 22 30"><path d="M7.5 0 H19.5 V27 H0 V7.5 Z" fill="#8c9aa4"/><path d="M0 6 L6 0 V6 Z" fill="#8c9aa4"/><path d="M4 12 H16 M4 16.5 H16 M4 21 H12" stroke="#3c3f41" stroke-width="2"/></svg><div class="t" style="left:158px;top:1421.34px;font-size:25px;color:#bbbbbb;letter-spacing:0.5px;">obfuscation-rules.txt</div><svg style="left:126px;top:1486px;--bg:#3c3f41" width="28" height="32"><use href="#ijson" width="28" height="32"/></svg><div class="t" style="left:158px;top:1461.34px;font-size:25px;color:#bbbbbb;letter-spacing:0.5px;">oh-package.json5</div><svg style="left:53px;top:1531px" width="14" height="18" viewBox="0 0 14 18"><path d="M2 1.5 L10 9 L2 16.5" fill="none" stroke="#afb1b3" stroke-width="2.6"/></svg><svg style="left:86px;top:1528px" width="28" height="22" viewBox="0 0 28 22"><path d="M0 0 H9.2 L13.4 3.9 H28 V22 H0 Z" fill="#87939a"/></svg><div class="t" style="left:122px;top:1501.34px;font-size:25px;color:#bbbbbb;letter-spacing:0.5px;">hvigor</div><div class="a" style="left:0px;top:1560px;width:628px;height:40px;background:#4c473c;"></div><svg style="left:53px;top:1571px" width="14" height="18" viewBox="0 0 14 18"><path d="M2 1.5 L10 9 L2 16.5" fill="none" stroke="#afb1b3" stroke-width="2.6"/></svg><svg style="left:86px;top:1568px" width="28" height="22" viewBox="0 0 28 22"><path d="M0 0 H9.2 L13.4 3.9 H28 V22 H0 Z" fill="#b35c2e"/></svg><div class="t" style="left:122px;top:1541.34px;font-size:25px;color:#bbbbbb;letter-spacing:0.5px;">oh_modules</div><div class="a" style="left:610px;top:2px;width:16px;height:1231px;background:rgba(255,255,255,0.16);"></div><div class="a" style="left:2px;top:1550px;width:468px;height:16px;background:rgba(255,255,255,0.16);"></div></div><div class="a" style="left:823px;top:660px;width:2014px;height:62px;background:#323232;"></div><div class="a" style="left:992px;top:412px;width:88px;height:62px;background:#344134;"></div><div class="a" style="left:876px;top:351px;width:2px;height:494px;background:#393b3d;"></div><div class="a" style="left:921px;top:412px;width:2px;height:124px;background:#393b3d;"></div><div class="a" style="left:921px;top:660px;width:2px;height:123px;background:#393b3d;"></div><div class="a" style="left:821px;top:224px;width:2px;height:1466px;background:#555759;"></div><svg style="left:808px;top:244px" width="28" height="34" viewBox="0 0 28 34"><path d="M1 1 H27 V21.7 L14 33 L1 21.7 Z" fill="#2b2b2b" stroke="#5b5d5f" stroke-width="2"/><rect x="7" y="12" width="14" height="2" fill="#5b5d5f"/></svg><svg style="left:808px;top:306px" width="28" height="34" viewBox="0 0 28 34"><path d="M1 1 H27 V21.7 L14 33 L1 21.7 Z" fill="#2b2b2b" stroke="#5b5d5f" stroke-width="2"/><rect x="7" y="12" width="14" height="2" fill="#5b5d5f"/></svg><svg style="left:808px;top:368px" width="28" height="34" viewBox="0 0 28 34"><path d="M1 1 H27 V21.7 L14 33 L1 21.7 Z" fill="#2b2b2b" stroke="#5b5d5f" stroke-width="2"/><rect x="7" y="12" width="14" height="2" fill="#5b5d5f"/></svg><svg style="left:808px;top:616px" width="28" height="34" viewBox="0 0 28 34"><path d="M1 1 H27 V21.7 L14 33 L1 21.7 Z" fill="#2b2b2b" stroke="#5b5d5f" stroke-width="2"/><rect x="7" y="12" width="14" height="2" fill="#5b5d5f"/></svg><svg style="left:808px;top:547px" width="28" height="34" viewBox="0 0 28 34"><path d="M1 33 H27 V12.3 L14 1 L1 12.3 Z" fill="#2b2b2b" stroke="#5b5d5f" stroke-width="2"/><rect x="7" y="19" width="14" height="2" fill="#5b5d5f"/></svg><svg style="left:808px;top:795px" width="28" height="34" viewBox="0 0 28 34"><path d="M1 33 H27 V12.3 L14 1 L1 12.3 Z" fill="#2b2b2b" stroke="#5b5d5f" stroke-width="2"/><rect x="7" y="19" width="14" height="2" fill="#5b5d5f"/></svg><svg style="left:808px;top:857px" width="28" height="34" viewBox="0 0 28 34"><path d="M1 33 H27 V12.3 L14 1 L1 12.3 Z" fill="#2b2b2b" stroke="#5b5d5f" stroke-width="2"/><rect x="7" y="19" width="14" height="2" fill="#5b5d5f"/></svg><svg style="left:808px;top:919px" width="28" height="34" viewBox="0 0 28 34"><path d="M1 33 H27 V12.3 L14 1 L1 12.3 Z" fill="#2b2b2b" stroke="#5b5d5f" stroke-width="2"/><rect x="7" y="19" width="14" height="2" fill="#5b5d5f"/></svg><div class="t m" style="left:703.0px;top:220.23px;font-size:36.67px;color:#606366;letter-spacing:-2.2px;">1</div><div class="t m" style="left:703.0px;top:282.23px;font-size:36.67px;color:#606366;letter-spacing:-2.2px;">2</div><div class="t m" style="left:703.0px;top:344.23px;font-size:36.67px;color:#606366;letter-spacing:-2.2px;">3</div><div class="t m" style="left:703.0px;top:406.23px;font-size:36.67px;color:#606366;letter-spacing:-2.2px;">4</div><div class="t m" style="left:703.0px;top:468.23px;font-size:36.67px;color:#606366;letter-spacing:-2.2px;">5</div><div class="t m" style="left:703.0px;top:530.23px;font-size:36.67px;color:#606366;letter-spacing:-2.2px;">6</div><div class="t m" style="left:703.0px;top:592.23px;font-size:36.67px;color:#606366;letter-spacing:-2.2px;">7</div><div class="t m" style="left:703.0px;top:654.23px;font-size:36.67px;color:#a4a3a3;letter-spacing:-2.2px;">8</div><div class="t m" style="left:703.0px;top:716.23px;font-size:36.67px;color:#606366;letter-spacing:-2.2px;">9</div><div class="t m" style="left:683.2px;top:778.23px;font-size:36.67px;color:#606366;letter-spacing:-2.2px;">10</div><div class="t m" style="left:683.2px;top:840.23px;font-size:36.67px;color:#606366;letter-spacing:-2.2px;">11</div><div class="t m" style="left:683.2px;top:902.23px;font-size:36.67px;color:#606366;letter-spacing:-2.2px;">12</div><div class="t m" style="left:683.2px;top:964.23px;font-size:36.67px;color:#606366;letter-spacing:-2.2px;">13</div><div class="t m" style="left:837.5px;top:220.23px;font-size:36.67px;color:#bbbbbb;white-space:pre;"><span style="color:#a9b7c6">{</span></div><div class="t m" style="left:837.5px;top:282.23px;font-size:36.67px;color:#bbbbbb;white-space:pre;">  <span style="color:#9876aa">&quot;string&quot;</span><span style="color:#cc7832">: </span><span style="color:#a9b7c6">[</span></div><div class="t m" style="left:837.5px;top:344.23px;font-size:36.67px;color:#bbbbbb;white-space:pre;">    <span style="color:#a9b7c6">{</span></div><div class="t m" style="left:837.5px;top:406.23px;font-size:36.67px;color:#bbbbbb;white-space:pre;">      <span style="color:#9876aa">&quot;name&quot;</span><span style="color:#cc7832">: </span><span style="color:#6a8759">&quot;app_name&quot;</span><span style="color:#cc7832">,</span></div><div class="t m" style="left:837.5px;top:468.23px;font-size:36.67px;color:#bbbbbb;white-space:pre;">      <span style="color:#9876aa">&quot;value&quot;</span><span style="color:#cc7832">: </span><span style="color:#6a8759">&quot;BloothDebugger&quot;</span></div><div class="t m" style="left:837.5px;top:530.23px;font-size:36.67px;color:#bbbbbb;white-space:pre;">    <span style="color:#a9b7c6">}</span><span style="color:#cc7832">,</span></div><div class="t m" style="left:837.5px;top:592.23px;font-size:36.67px;color:#bbbbbb;white-space:pre;">    <span style="color:#a9b7c6">{</span></div><div class="t m" style="left:837.5px;top:654.23px;font-size:36.67px;color:#bbbbbb;white-space:pre;">      <span style="color:#9876aa">&quot;name&quot;</span><span style="color:#cc7832">: </span><span style="color:#6a8759">&quot;blooth_reason&quot;</span><span style="color:#cc7832">,</span></div><div class="t m" style="left:837.5px;top:716.23px;font-size:36.67px;color:#bbbbbb;white-space:pre;">      <span style="color:#9876aa">&quot;value&quot;</span><span style="color:#cc7832">: </span><span style="color:#6a8759">&quot;</span><span style="color:#6a8759;font-size:33px;letter-spacing:3.67px">用于查找附近蓝牙设备</span><span style="color:#6a8759">&quot;</span></div><div class="t m" style="left:837.5px;top:778.23px;font-size:36.67px;color:#bbbbbb;white-space:pre;">    <span style="color:#a9b7c6">}</span></div><div class="t m" style="left:837.5px;top:840.23px;font-size:36.67px;color:#bbbbbb;white-space:pre;">  <span style="color:#a9b7c6">]</span></div><div class="t m" style="left:837.5px;top:902.23px;font-size:36.67px;color:#bbbbbb;white-space:pre;"><span style="color:#a9b7c6">}</span></div><svg style="left:1188px;top:522px" width="132" height="6" viewBox="0 0 132 6"><path d="M0 4 l4 -4 l4 4 l4 -4 l4 4 l4 -4 l4 4 l4 -4 l4 4 l4 -4 l4 4 l4 -4 l4 4 l4 -4 l4 4 l4 -4 l4 4 l4 -4 l4 4 l4 -4 l4 4 l4 -4 l4 4 l4 -4 l4 4 l4 -4 l4 4 l4 -4 l4 4 l4 -4 l4 4 l4 -4 l4 4" fill="none" stroke="#6a8759" stroke-width="1.6"/></svg><svg style="left:1166px;top:708px" width="132" height="6" viewBox="0 0 132 6"><path d="M0 4 l4 -4 l4 4 l4 -4 l4 4 l4 -4 l4 4 l4 -4 l4 4 l4 -4 l4 4 l4 -4 l4 4 l4 -4 l4 4 l4 -4 l4 4 l4 -4 l4 4 l4 -4 l4 4 l4 -4 l4 4 l4 -4 l4 4 l4 -4 l4 4 l4 -4 l4 4 l4 -4 l4 4 l4 -4 l4 4" fill="none" stroke="#6a8759" stroke-width="1.6"/></svg><div class="a" style="left:969px;top:666px;width:4px;height:50px;background:#bbbbbb;"></div><svg style="left:855px;top:617px" width="22" height="30" viewBox="0 0 22 30"><path d="M11 1 C5 1 1 5.3 1 10.5 C1 14.5 3.8 17 4.6 20 H17.4 C18.2 17 21 14.5 21 10.5 C21 5.3 17 1 11 1 Z" fill="#f0a732"/><rect x="4.5" y="22" width="13" height="2.6" fill="#c8c8c8"/><path d="M5.5 26.3 H16.5 L15 28.8 H7 Z" fill="#c8c8c8"/></svg><svg style="left:2694px;top:241px" width="28" height="28" viewBox="0 0 28 28"><path d="M4.7 8.3 L11.5 15.5 L23.4 3.2" fill="none" stroke="#499c54" stroke-width="4.2" stroke-linecap="square"/><path d="M2.8 23.9 L7.5 19.5 L11.5 23.9 L15.3 19.5 L19.6 23.9 L24 19.4" fill="none" stroke="#499c54" stroke-width="2.4"/></svg><div class="t" style="left:2727px;top:213.34px;font-size:25px;color:#bbbbbb;">2</div><svg style="left:2760px;top:244px" width="20" height="12" viewBox="0 0 20 12"><path d="M2 10 L10 2 L18 10" fill="none" stroke="#afb1b3" stroke-width="2.4"/></svg><svg style="left:2802px;top:246px" width="20" height="12" viewBox="0 0 20 12"><path d="M2 2 L10 10 L18 2" fill="none" stroke="#afb1b3" stroke-width="2.4"/></svg><div class="a" style="left:2808px;top:464px;width:28px;height:3px;background:#2f7d2f;"></div><div class="t" style="left:694.5px;top:1675.34px;font-size:25px;color:#bbbbbb;letter-spacing:0.477px;">string</div><svg style="left:783px;top:1709px" width="9" height="14" viewBox="0 0 9 14"><path d="M1 1 L7 7 L1 13" fill="none" stroke="#6e7073" stroke-width="1.6"/></svg><div class="t" style="left:809px;top:1675.34px;font-size:25px;color:#bbbbbb;">1</div><svg style="left:845px;top:1709px" width="9" height="14" viewBox="0 0 9 14"><path d="M1 1 L7 7 L1 13" fill="none" stroke="#6e7073" stroke-width="1.6"/></svg><div class="t" style="left:871px;top:1675.34px;font-size:25px;color:#bbbbbb;letter-spacing:-0.137px;">name</div><svg style="left:2844px;top:142px" width="28" height="28" viewBox="0 0 28 28"><circle cx="14" cy="14" r="11.5" fill="none" stroke="#afb1b3" stroke-width="2.2"/><circle cx="14" cy="2.8" r="2.8" fill="#afb1b3"/><circle cx="3.5" cy="20" r="2.8" fill="#afb1b3"/><circle cx="24.5" cy="20" r="2.8" fill="#afb1b3"/><rect x="9" y="9" width="4.3" height="4.3" fill="#afb1b3"/><rect x="14.7" y="9" width="4.3" height="4.3" fill="#afb1b3"/><rect x="9" y="14.7" width="4.3" height="4.3" fill="#afb1b3"/><rect x="14.7" y="14.7" width="4.3" height="4.3" fill="#afb1b3"/></svg><div class="a" style="left:2858px;top:268px;width:0;height:0"><div style="position:absolute;left:0;top:0;transform:translate(-50%,-50%) rotate(90deg);white-space:nowrap;font-size:22px;line-height:28px;color:#bbbbbb">应用与元服务体检</div></div><svg style="left:2848px;top:404px" width="26" height="28" viewBox="0 0 26 28"><path d="M11 4 C5.5 4 3.5 8.5 3.5 13 V18 L0.5 22 H21.5 L18.5 18 V13 C18.5 8.5 16.5 4 11 4 Z" fill="#afb1b3"/><path d="M7.5 24 H14.5 C14 26 12.6 27 11 27 C9.4 27 8 26 7.5 24 Z" fill="#afb1b3"/><circle cx="19.5" cy="5.5" r="5.2" fill="#db5c5c" stroke="#3c3f41" stroke-width="1.2"/></svg><div class="a" style="left:2858px;top:505.5px;width:0;height:0"><div style="position:absolute;left:0;top:0;transform:translate(-50%,-50%) rotate(90deg);white-space:nowrap;font-size:24px;line-height:30px;color:#bbbbbb">Notifications</div></div><svg style="left:2846px;top:619px" width="24" height="28" viewBox="0 0 24 28"><path d="M12 1 L22.5 7 V20 L12 26 L1.5 20 V7 Z" fill="#afb1b3"/><path d="M15.5 9.5 C14.5 8.5 13.3 8 12 8 C9 8 6.8 10.5 6.8 13.5 C6.8 16.5 9 19 12 19 C14 19 15.6 18 16.5 16.3 V13.5 H12" fill="none" stroke="#3c3f41" stroke-width="2.6"/></svg><div class="a" style="left:2858px;top:717px;width:0;height:0"><div style="position:absolute;left:0;top:0;transform:translate(-50%,-50%) rotate(90deg);white-space:nowrap;font-size:24px;line-height:30px;color:#bbbbbb">CodeGenie</div></div><svg style="left:2845px;top:819px" width="26" height="19" viewBox="0 0 26 19"><path d="M1 9.5 C5 3 9 1 13 1 C17 1 21 3 25 9.5 C21 16 17 18 13 18 C9 18 5 16 1 9.5 Z" fill="#afb1b3"/><circle cx="13" cy="9.5" r="5.3" fill="#3c3f41"/><circle cx="13" cy="9.5" r="3" fill="#afb1b3"/></svg><div class="a" style="left:2858px;top:880.5px;width:0;height:0"><div style="position:absolute;left:0;top:0;transform:translate(-50%,-50%) rotate(90deg);white-space:nowrap;font-size:22px;line-height:28px;color:#bbbbbb">预览器</div></div><svg style="left:2849px;top:1473px" width="18" height="25" viewBox="0 0 18 25"><rect x="1.2" y="1.2" width="15.6" height="22.6" rx="2" fill="none" stroke="#afb1b3" stroke-width="2.4"/><rect x="6" y="19" width="6" height="2" fill="#afb1b3"/></svg><div class="a" style="left:2858px;top:1612px;width:0;height:0"><div style="position:absolute;left:0;top:0;transform:translate(-50%,-50%) rotate(90deg);white-space:nowrap;font-size:24px;line-height:30px;color:#bbbbbb">Device File Browser</div></div><svg style="left:70px;top:1751px" width="22" height="25" viewBox="0 0 22 25"><circle cx="4" cy="3.8" r="3.6" fill="#afb1b3"/><circle cx="4" cy="20.5" r="3.6" fill="#afb1b3"/><circle cx="16" cy="6.8" r="3.6" fill="#afb1b3"/><path d="M4 3.8 V20.5 M16 6.8 C16 12.5 12 14.5 4 16.5" fill="none" stroke="#afb1b3" stroke-width="2.8"/></svg><div class="t" style="left:100px;top:1723.68px;font-size:24px;color:#bbbbbb;"><span style="font-size:22px">版本控制</span></div><svg style="left:238px;top:1749px" width="28" height="26" viewBox="0 0 28 26"><path d="M2 0 V24 H26" fill="none" stroke="#afb1b3" stroke-width="2.2"/><path d="M6 19 L12 8 L17 14 L24 4" fill="none" stroke="#afb1b3" stroke-width="2.2"/></svg><div class="t" style="left:277px;top:1724.18px;font-size:24px;color:#bbbbbb;letter-spacing:-0.118px;">Operation Analyzer</div><svg style="left:528px;top:1749px" width="28" height="27" viewBox="0 0 28 27"><path d="M27 0 L1 12 L9 14 L5 20 L14 17 L17 26 Z" fill="#afb1b3"/><path d="M9 14 L27 0" stroke="#3c3f41" stroke-width="2"/></svg><div class="t" style="left:566px;top:1724.18px;font-size:24px;color:#bbbbbb;letter-spacing:-0.129px;">Profiler</div><svg style="left:685px;top:1753px" width="22" height="18" viewBox="0 0 22 18"><g fill="#afb1b3"><rect x="0" y="0" width="4" height="4"/><rect x="6" y="0" width="15" height="4"/><rect x="0" y="7" width="4" height="4"/><rect x="6" y="7" width="15" height="4"/><rect x="0" y="14" width="4" height="4"/><rect x="6" y="14" width="15" height="4"/></g></svg><div class="t" style="left:716.5px;top:1724.18px;font-size:24px;color:#bbbbbb;letter-spacing:-1.102px;">TODO</div><svg style="left:821px;top:1749px" width="28" height="26" viewBox="0 0 28 26"><rect x="0.5" y="2" width="26" height="22.5" fill="#afb1b3"/><rect x="4.5" y="0" width="3" height="4" fill="#afb1b3"/><rect x="19.5" y="0" width="3" height="4" fill="#afb1b3"/><path d="M4.5 8.5 H22 M4.5 13.5 H12 M4.5 19 H22" stroke="#3c3f41" stroke-width="2"/></svg><div class="t" style="left:858px;top:1723.68px;font-size:24px;color:#bbbbbb;"><span style="font-size:22px">日志</span></div><svg style="left:938px;top:1750px" width="22" height="22" viewBox="0 0 22 22"><circle cx="11" cy="11" r="10.5" fill="#afb1b3"/><rect x="9" y="4" width="4" height="8.5" fill="#3c3f41"/><rect x="9" y="14.5" width="4" height="3.5" fill="#3c3f41"/></svg><div class="t" style="left:970px;top:1723.68px;font-size:24px;color:#bbbbbb;"><span style="font-size:22px">问题</span></div><svg style="left:1051px;top:1752px" width="23" height="21" viewBox="0 0 23 21"><rect x="0" y="0" width="22.5" height="20.5" fill="#afb1b3"/><path d="M4 5 L9 9 L4 13" fill="none" stroke="#3c3f41" stroke-width="2"/><path d="M11 15.5 H18" stroke="#3c3f41" stroke-width="2"/></svg><div class="t" style="left:1084px;top:1723.68px;font-size:24px;color:#bbbbbb;"><span style="font-size:22px">终端</span></div><svg style="left:1164px;top:1751px" width="26" height="23" viewBox="0 0 26 23"><path d="M7 0.5 H19 L25.5 11.5 L19 22.5 H7 L0.5 11.5 Z" fill="#afb1b3"/><polygon points="10,6 18.5,11.5 10,17" fill="#3c3f41"/></svg><div class="t" style="left:1198px;top:1723.68px;font-size:24px;color:#bbbbbb;"><span style="font-size:22px">服务</span></div><svg style="left:1279px;top:1750px" width="27" height="27" viewBox="0 0 27 27"><circle cx="11.5" cy="11.5" r="10.5" fill="#afb1b3"/><path d="M18 18 L25 25" stroke="#afb1b3" stroke-width="3.4"/><path d="M8 7.5 L5 11.5 L8 15.5 M15 7.5 L18 11.5 L15 15.5 M12.8 6.5 L10.2 16.5" fill="none" stroke="#3c3f41" stroke-width="1.7"/></svg><div class="t" style="left:1314px;top:1724.18px;font-size:24px;color:#bbbbbb;letter-spacing:-0.189px;">Code Linter</div><svg style="left:1485px;top:1751px" width="25" height="21" viewBox="0 0 25 21"><rect x="0" y="0" width="24.5" height="5" fill="#afb1b3"/><rect x="0" y="7.5" width="6.5" height="13.5" fill="#afb1b3"/><rect x="9" y="7.5" width="15.5" height="5" fill="#afb1b3"/><rect x="9" y="15" width="15.5" height="6" fill="#afb1b3"/></svg><div class="t" style="left:1520px;top:1724.18px;font-size:24px;color:#bbbbbb;letter-spacing:-0.293px;">ArkUI Inspector</div><svg style="left:23px;top:1795px" width="26" height="23" viewBox="0 0 26 23"><rect x="6" y="1" width="18.5" height="16" fill="none" stroke="#afb1b3" stroke-width="2"/><path d="M1 6 V21.5 H19" fill="none" stroke="#afb1b3" stroke-width="2"/></svg><div class="t" style="left:79px;top:1765.31px;font-size:24.5px;color:#bbbbbb;letter-spacing:0.599px;">Microsoft Defender configuration: The IDE has detected Microsoft Defender with Real-Time Protection enabled. It might severely degra... (25 minutes ago)</div><svg style="left:1989px;top:1793px" width="26" height="26" viewBox="0 0 26 26"><path d="M5 7 L11 3.5 L20 8.5 V16 L13 20" fill="none" stroke="#6f7173" stroke-width="2.6"/><path d="M5 7 V17 L11 21" fill="none" stroke="#6f7173" stroke-width="2.6"/><path d="M2 2 L24 24" stroke="#6f7173" stroke-width="2.6"/></svg><svg style="left:2037px;top:1793px" width="26" height="26" viewBox="0 0 26 26"><circle cx="13" cy="13" r="12" fill="#3dab3d"/></svg><div class="t" style="left:2085.5px;top:1765.48px;font-size:24px;color:#bbbbbb;letter-spacing:0.042px;">8:7</div><div class="t" style="left:2145px;top:1765.48px;font-size:24px;color:#bbbbbb;letter-spacing:-1.918px;">CRLF</div><div class="t" style="left:2226.5px;top:1765.48px;font-size:24px;color:#bbbbbb;letter-spacing:0.100px;">UTF-8</div><div class="t" style="left:2320.5px;top:1765.48px;font-size:24px;color:#bbbbbb;letter-spacing:-0.070px;">2 spaces</div><div class="t" style="left:2441px;top:1765.48px;font-size:24px;color:#bbbbbb;letter-spacing:0.538px;">JSON: elementResourceSchema</div><svg style="left:2831px;top:1794px" width="24" height="24" viewBox="0 0 24 24"><path d="M5 10 V6.5 C5 3 7.5 1 10.5 1 C13.5 1 16 3 16 6.5" fill="none" stroke="#afb1b3" stroke-width="2.4"/><rect x="8" y="11" width="15" height="12" fill="#afb1b3"/></svg></body></html>
